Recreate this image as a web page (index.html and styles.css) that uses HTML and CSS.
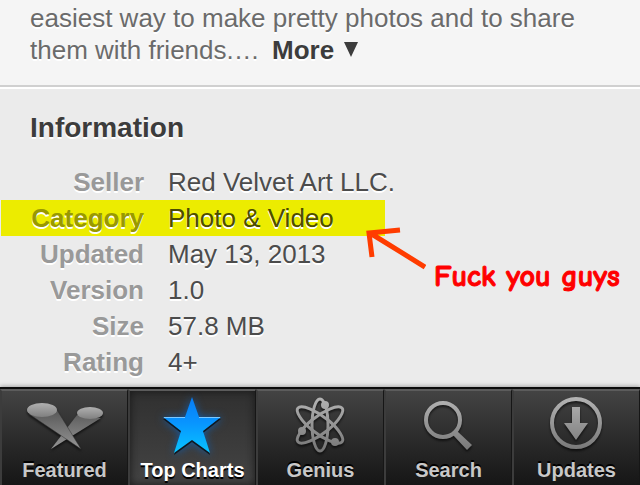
FILE: index.html
```html
<!DOCTYPE html>
<html lang="en">
<head>
    <meta charset="UTF-8">
    <meta name="viewport" content="width=device-width, initial-scale=1.0">
    <title>App Details</title>
    <link rel="stylesheet" href="styles.css">
</head>
<body>
    <section class="description">
        <p>easiest way to make pretty photos and to share them with friends.… <a class="more" href="#">More<svg class="more-arrow" viewBox="0 0 14 16" aria-hidden="true"><path d="M0 0h14L7 15z"/></svg></a></p>
    </section>

    <section class="information">
        <h2>Information</h2>
        <table class="info-table">
            <tr><th scope="row">Seller</th><td>Red Velvet Art LLC.</td></tr>
            <tr class="highlight"><th scope="row">Category</th><td>Photo &amp; Video</td></tr>
            <tr><th scope="row">Updated</th><td>May 13, 2013</td></tr>
            <tr><th scope="row">Version</th><td>1.0</td></tr>
            <tr><th scope="row">Size</th><td>57.8 MB</td></tr>
            <tr><th scope="row">Rating</th><td>4+</td></tr>
        </table>
        <!-- Note pointing at the category -->
        <div class="note">
            <svg class="note-arrow" viewBox="0 0 60 46" aria-hidden="true">
                <path d="M59 40L4 6M34 3L3 6l3 24"/>
            </svg>
            <span class="note-text">Fuck you guys</span>
        </div>
    </section>

    <nav class="tab-bar">
        <a class="tab" href="#">
            <svg class="tab-icon" viewBox="0 0 80 60" aria-hidden="true">
                <defs>
                    <linearGradient id="grey" gradientUnits="userSpaceOnUse" x1="0" y1="2" x2="0" y2="58">
                        <stop offset="0" stop-color="#b4b4b4"/>
                        <stop offset="1" stop-color="#747474"/>
                    </linearGradient>
                    <linearGradient id="beam" gradientUnits="userSpaceOnUse" x1="0" y1="12" x2="0" y2="54">
                        <stop offset="0" stop-color="#525252"/>
                        <stop offset="1" stop-color="#969696"/>
                    </linearGradient>
                    <linearGradient id="lens" x1="0" y1="0" x2="0" y2="1">
                        <stop offset="0" stop-color="#b0b0b0"/>
                        <stop offset="1" stop-color="#808080"/>
                    </linearGradient>
                </defs>
                <path d="M52 20L26 54 76 23z" fill="url(#beam)"/>
                <ellipse cx="65" cy="18" rx="13" ry="6" fill="url(#lens)"/>
                <path d="M4 19L56 54 32 15z" fill="url(#beam)" stroke="#333" stroke-width="0.5"/>
                <ellipse cx="17" cy="15" rx="15" ry="7" fill="url(#lens)"/>
            </svg>
            Featured
        </a>
        <a class="tab active" href="#">
            <svg class="tab-icon" viewBox="0 0 80 60" aria-hidden="true">
                <defs>
                    <linearGradient id="blue" x1="0" y1="0" x2="0" y2="1">
                        <stop offset="0" stop-color="#087cf4"/>
                        <stop offset="0.45" stop-color="#0894ff"/>
                        <stop offset="1" stop-color="#08c4ff"/>
                    </linearGradient>
                </defs>
                <path d="M39 2L46 22H68L50 36L57 58L39 45L21 58L28 36L10 22H32z" fill="url(#blue)"/>
                <path d="M11 22.500H32M46 22.500H67" fill="none" stroke="#7cc8ff" stroke-width="1"/>
            </svg>
            Top Charts
        </a>
        <a class="tab" href="#">
            <svg class="tab-icon" viewBox="0 0 80 60" aria-hidden="true">
                <g fill="none" stroke="url(#grey)" stroke-width="3">
                    <ellipse cx="39" cy="30" rx="8" ry="26"/>
                    <path d="M17 13C21 9 36 16 47 25S64 44 61 47C57 51 42 44 31 35S14 16 17 13z"/>
                    <path d="M61 13C57 9 42 16 31 25S14 44 17 47C21 51 36 44 47 35S64 16 61 13z"/>
                </g>
                <g fill="url(#grey)">
                    <circle cx="44" cy="10" r="4"/>
                    <circle cx="21" cy="36" r="4"/>
                    <circle cx="54" cy="47" r="4"/>
                </g>
            </svg>
            Genius
        </a>
        <a class="tab" href="#">
            <svg class="tab-icon" viewBox="0 0 80 60" aria-hidden="true">
                <circle cx="34" cy="25" r="17" fill="none" stroke="url(#grey)" stroke-width="4"/>
                <path d="M44 40L48 36 63 50 58 55z" fill="url(#grey)"/>
            </svg>
            Search
        </a>
        <a class="tab" href="#">
            <svg class="tab-icon" viewBox="0 0 80 60" aria-hidden="true">
                <circle cx="39" cy="28" r="24" fill="none" stroke="url(#grey)" stroke-width="4"/>
                <path d="M35 12H43V28H51L39 45L27 28H35z" fill="url(#grey)"/>
            </svg>
            Updates
        </a>
    </nav>
</body>
</html>
```

FILE: styles.css
```css
* {
    box-sizing: border-box;
}
body {
    display: flex;
    flex-direction: column;
    min-height: 100vh;
    margin: 0;
    font-family: "Liberation Sans", Arial, sans-serif;
    font-size: 26px;
    color: #4c4c4c;
    background-color: #ebebeb;
    text-shadow: 0 2px 0 #fff;
}
a {
    color: inherit;
    text-decoration: none;
}
.description {
    padding: 2px 30px 19px;
    color: #6b6b6b;
    line-height: 32px;
    background-color: #f5f5f5;
    border-bottom: 2px solid #d0d0d0;
}
.description p {
    margin: 0;
}
.more {
    display: inline-block;
    margin-left: 5px;
    color: #3c3c3c;
    font-weight: bold;
}
.more-arrow {
    width: 14px;
    height: 16px;
    margin-left: 10px;
    vertical-align: 1px;
    fill: #3c3c3c;
}
.information {
    position: relative;
    isolation: isolate;
    padding: 23px 30px 7px;
    border-top: 2px solid #fff;
}
.information h2 {
    margin: 0 0 20px;
    color: #3c3c3c;
    font-size: 28px;
    line-height: 32px;
}
.info-table {
    border-collapse: collapse;
    line-height: 36px;
}
.info-table th {
    width: 138px;
    padding: 0 24px 0 0;
    color: #999;
    text-align: right;
}
.info-table td {
    padding: 0;
}
/* marker stroke behind the row */
.highlight th::before {
    content: "";
    position: absolute;
    z-index: -1;
    left: 1px;
    width: 60%;
    height: 36px;
    background-color: #ecec00;
}
.info-table .highlight th {
    color: #999900;
}
.highlight td {
    color: #4c4c00;
}
.note {
    position: absolute;
    top: 138px;
    left: 366px;
    display: flex;
    color: #f00;
    font-family: "Comic Sans MS", "Comic Neue", "Open Sans", sans-serif;
    font-size: 30px;
    font-weight: bold;
    line-height: 36px;
    text-shadow: none;
    -webkit-text-stroke: 1px #f00;
}
.note-arrow {
    width: 60px;
    height: 46px;
    fill: none;
    stroke: #ff3c00;
    stroke-width: 5;
}
.note-text {
    margin: 32px 0 0 8px;
    white-space: nowrap;
}
.tab-bar {
    display: flex;
    height: 98px;
    margin-top: auto;
    border-top: 2px solid #0c0c0c;
    background-image: linear-gradient(#444, #2c2c2c 50%, #161616);
    box-shadow: 0 -1px 4px rgba(0, 0, 0, 0.3);
}
.tab {
    display: flex;
    flex: 1;
    flex-direction: column;
    align-items: center;
    padding-top: 4px;
    color: #c8c8c8;
    font-size: 20px;
    font-weight: bold;
    line-height: 24px;
    text-shadow: 0 -2px 0 #000;
    border-top: 2px solid #5c5c5c;
    border-right: 1px solid #161616;
    border-left: 2px solid #3c3c3c;
}
.tab-icon {
    width: 80px;
    height: 60px;
    margin-bottom: 3px;
    filter: drop-shadow(0 2px 1px rgba(0, 0, 0, 0.6));
}
.active {
    color: #fff;
    text-shadow: 0 2px 0 #000;
    background-image: linear-gradient(#303030, #444);
    box-shadow: inset 0 0 8px #181818;
}
.active .tab-icon {
    overflow: visible;
    filter: drop-shadow(0 2px 0 #101820) drop-shadow(0 0 4px #1458a0);
}
```
